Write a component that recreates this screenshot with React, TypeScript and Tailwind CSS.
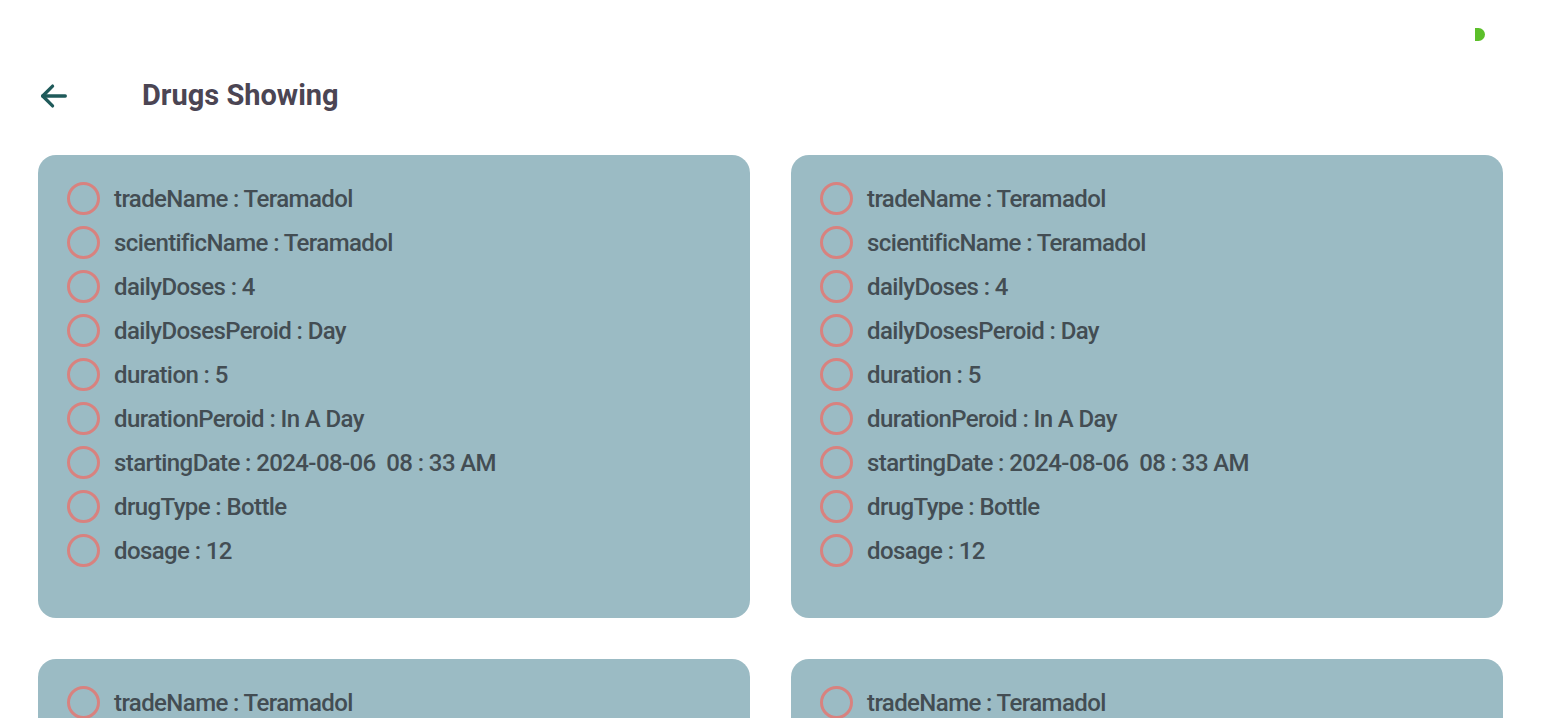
import React from "react";

const rows: [string, string][] = [
  ["tradeName", "Teramadol"],
  ["scientificName", "Teramadol"],
  ["dailyDoses", "4"],
  ["dailyDosesPeroid", "Day"],
  ["duration", "5"],
  ["durationPeroid", "In A Day"],
  ["startingDate", "2024-08-06  08 : 33 AM"],
  ["drugType", "Bottle"],
  ["dosage", "12"],
];

function Card() {
  return (
    <div className="bg-[#9bbbc4] rounded-[18px] pl-[29px] pt-[21px] pb-[46px]">
      {rows.map(([k, v]) => (
        <div key={k} className="flex items-center h-[44px]">
          <div className="w-[33px] h-[33px] rounded-full border-[3px] border-[#d8827f] shrink-0" />
          <span className="ml-[14px] text-[24px] font-medium text-[#434d53] whitespace-pre tracking-[-0.6px] leading-none pt-[1px]">
            {k} : {v}
          </span>
        </div>
      ))}
    </div>
  );
}

export default function App() {
  return (
    <div className="w-[1541px] h-[718px] overflow-hidden bg-white relative font-[Roboto,sans-serif]">
      <div className="absolute left-[1475px] top-[28px] w-[10px] h-[13px] bg-[#5cbf2a] rounded-r-full" />
      <div className="flex items-center pt-[78px] pl-[37px] h-[155px] pb-[42px]">
        <svg width="34" height="34" viewBox="0 0 24 24" fill="none" stroke="#1f5a5a" strokeWidth="2.3" strokeLinecap="round" strokeLinejoin="round">
          <path d="M20 12H4" />
          <path d="M11 5l-7 7 7 7" />
        </svg>
        <h1 className="ml-[71px] text-[29px] font-bold text-[#4b4553]">Drugs Showing</h1>
      </div>
      <div className="grid grid-cols-[712px_712px] gap-x-[41px] gap-y-[41px] pl-[38px]">
        <Card />
        <Card />
        <Card />
        <Card />
      </div>
    </div>
  );
}
